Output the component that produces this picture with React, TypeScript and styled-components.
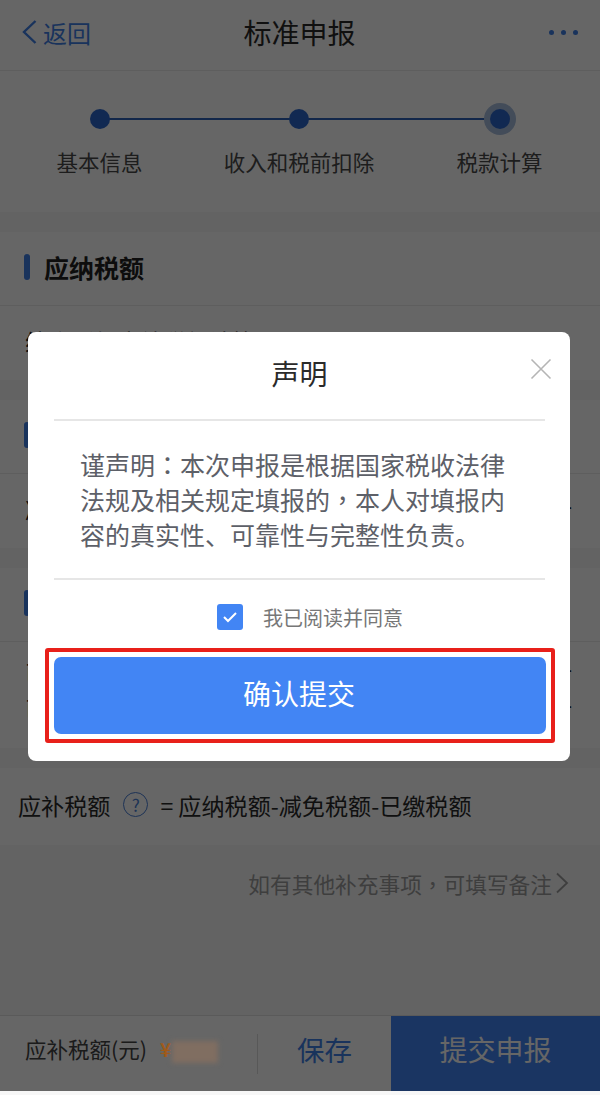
import styled, { createGlobalStyle } from "styled-components"

const GlobalStyle = createGlobalStyle`
  html, body {
    margin: 0;
    padding: 0;
    background: #fff;
    font-family: "Noto Sans CJK SC", "Noto Sans", sans-serif;
  }
  * { box-sizing: border-box; }
`

const Page = styled.div`
  position: relative;
  width: 600px;
  height: 1095px;
  display: flex;
  flex-direction: column;
  background: #f7f7f7;
  overflow: hidden;
`

const Header = styled.header`
  height: 71px;
  flex: none;
  display: grid;
  grid-template-columns: 1fr auto 1fr;
  align-items: center;
  padding: 0 22px 6px 21px;
  background: #fff;
  border-bottom: 1px solid #ececec;
`
const BackLink = styled.div`
  display: flex;
  align-items: center;
  gap: 5px;
  color: #3f7fe6;
  font-size: 24px;
`
const PageTitle = styled.h1`
  margin: 0;
  font-size: 28px;
  font-weight: 400;
  color: #2a2a2a;
`
const MoreDots = styled.div`
  justify-self: end;
  display: flex;
  gap: 7px;
  & > i {
    width: 5px;
    height: 5px;
    border-radius: 50%;
    background: #3f7fe6;
  }
`

const Steps = styled.section`
  height: 141px;
  flex: none;
  display: grid;
  grid-template-columns: 199px 200px 201px;
  padding-top: 32px;
  background: #fff;
  margin-bottom: 20px;
`
const Step = styled.div`
  display: flex;
  flex-direction: column;
  align-items: center;
`
const DotTrack = styled.div<{ $left?: boolean; $right?: boolean }>`
  width: 100%;
  height: 32px;
  display: flex;
  align-items: center;
  justify-content: center;
  background: linear-gradient(#2f62b8, #2f62b8)
    ${(p) => (p.$left ? "0" : "100%")} 50% / ${(p) => (p.$left && p.$right ? "100%" : "50%")} 2px no-repeat;
`
const Dot = styled.span<{ $active?: boolean }>`
  width: 20px;
  height: 20px;
  border-radius: 50%;
  background: #2c68cc;
  box-shadow: ${(p) => (p.$active ? "0 0 0 6px #a8bede" : "none")};
`
const StepLabel = styled.span`
  margin-top: 12px;
  font-size: 21.5px;
  line-height: 30px;
  color: #4a4a4a;
`

const Section = styled.section<{ $height: number }>`
  height: ${(p) => p.$height}px;
  flex: none;
  background: #fff;
  margin-bottom: 20px;
  overflow: hidden;
`
const SectionTitle = styled.div`
  height: 74px;
  display: flex;
  align-items: center;
  gap: 14px;
  padding: 0 24px 4px;
  border-bottom: 1px solid #ececec;
  font-size: 25px;
  font-weight: 700;
  color: #222;
  &::before {
    content: "";
    width: 6px;
    height: 26px;
    border-radius: 3px;
    background: #3f7fe6;
  }
`
const RowText = styled.p<{ $top: number; $lineHeight?: number; $justify?: boolean }>`
  margin: 0;
  padding: ${(p) => p.$top}px 28px 0 25px;
  font-size: 23px;
  line-height: ${(p) => p.$lineHeight ?? 30}px;
  color: #222;
  text-align: ${(p) => (p.$justify ? "justify" : "left")};
  text-align-last: ${(p) => (p.$justify ? "justify" : "left")};
`

const FormulaRow = styled.div`
  height: 77px;
  flex: none;
  display: flex;
  align-items: center;
  padding: 0 0 4px 18px;
  background: #fff;
  font-size: 23.1px;
  color: #2a2a2a;
`
const HelpIcon = styled.span`
  width: 25px;
  height: 25px;
  margin: 0 12px 0 13px;
  display: flex;
  align-items: center;
  justify-content: center;
  border: 1.5px solid #4a7fd6;
  border-radius: 50%;
  font-size: 17px;
  color: #4a7fd6;
`

const NoteLink = styled.div`
  height: 80px;
  flex: none;
  display: flex;
  align-items: center;
  justify-content: flex-end;
  gap: 3px;
  padding: 0 31px 4px 0;
  font-size: 21.7px;
  color: #9c9c9c;
`
const Punct = styled.span`
  font-family: "Noto Sans CJK TC", "Noto Sans CJK SC", sans-serif;
`
const Spacer = styled.div`
  flex: 1;
`

const Footer = styled.footer`
  height: 76px;
  flex: none;
  margin-bottom: 4px;
  display: flex;
  align-items: center;
  background: #fff;
  border-top: 1px solid #e2e2e2;
`
const AmountLabel = styled.span`
  width: 122px;
  margin: 0 0 10px 25px;
  font-size: 21.5px;
  white-space: nowrap;
  color: #444;
`
const Currency = styled.span`
  position: relative;
  z-index: 11;
  width: 12px;
  margin: 0 0 10px 13px;
  font-size: 19px;
  font-weight: 700;
  color: #a05a1a;
`
const MaskedAmount = styled.span`
  position: relative;
  z-index: 11;
  width: 46px;
  height: 22px;
  margin-bottom: 4px;
  background: #806e61;
  filter: blur(2.5px);
`
const FooterDivider = styled.span`
  width: 1px;
  height: 40px;
  margin-left: 39px;
  background: #ddd;
`
const SaveButton = styled.button`
  width: 133px;
  height: 100%;
  padding: 0 0 10px;
  border: 0;
  background: none;
  font: inherit;
  font-size: 27.5px;
  color: #3f7fe6;
`
const SubmitButton = styled.button`
  flex: 1;
  height: 100%;
  padding: 0 0 10px;
  border: 0;
  background: #4285f4;
  font: inherit;
  font-size: 28px;
  color: #fff;
`

const Overlay = styled.div`
  position: absolute;
  inset: 0 0 4px;
  z-index: 10;
  display: flex;
  justify-content: center;
  align-items: flex-start;
  padding: 332px 2px 0 0;
  background: rgba(0, 0, 0, 0.6);
`
const Modal = styled.div`
  width: 542px;
  height: 429px;
  display: flex;
  flex-direction: column;
  border-radius: 8px;
  background: #fff;
`
const ModalHeader = styled.div`
  height: 89px;
  flex: none;
  display: flex;
  align-items: center;
  justify-content: center;
  position: relative;
  margin: 0 25px 0 26px;
  padding-bottom: 6px;
  border-bottom: 2px solid #e6e6e6;
`
const ModalTitle = styled.h2`
  margin: 0;
  font-size: 28px;
  font-weight: 400;
  color: #2a2a2a;
`
const CloseIcon = styled.svg`
  position: absolute;
  top: 26px;
  right: -7px;
  width: 22px;
  height: 22px;
`
const ModalBody = styled.p`
  height: 159px;
  flex: none;
  margin: 0 25px 0 26px;
  padding: 26px 0 0 26px;
  border-bottom: 2px solid #e6e6e6;
  font-size: 25px;
  line-height: 35px;
  color: #5d6068;
  white-space: nowrap;
`
const AgreeRow = styled.label`
  height: 68px;
  flex: none;
  display: flex;
  align-items: center;
  justify-content: center;
  gap: 20px;
  padding: 6px 0 0 22px;
  font-size: 20px;
  color: #777;
`
const CheckBox = styled.span`
  width: 26px;
  height: 26px;
  display: flex;
  align-items: center;
  justify-content: center;
  border-radius: 3px;
  background: #4285f4;
`
const Highlight = styled.div`
  height: 95px;
  margin: 0 15px 0 17px;
  padding: 5px;
  border: 4px solid #e8201a;
  border-radius: 3px;
`
const ConfirmButton = styled.button`
  width: 100%;
  height: 100%;
  padding: 0 2px 6px 0;
  border: 0;
  border-radius: 7px;
  background: #4285f4;
  font: inherit;
  font-size: 28px;
  color: #fff;
`

function App() {
  return (
    <>
      <GlobalStyle />
      <Page>
        <Header>
          <BackLink>
            <svg width="17" height="26" viewBox="0 0 17 26" fill="none" stroke="#3f7fe6" strokeWidth="2.4">
              <path d="M14.5 2 3 13l11.5 11" />
            </svg>
            返回
          </BackLink>
          <PageTitle>标准申报</PageTitle>
          <MoreDots>
            <i />
            <i />
            <i />
          </MoreDots>
        </Header>

        <Steps>
          <Step>
            <DotTrack $right>
              <Dot />
            </DotTrack>
            <StepLabel>基本信息</StepLabel>
          </Step>
          <Step>
            <DotTrack $left $right>
              <Dot />
            </DotTrack>
            <StepLabel>收入和税前扣除</StepLabel>
          </Step>
          <Step>
            <DotTrack $left>
              <Dot $active />
            </DotTrack>
            <StepLabel>税款计算</StepLabel>
          </Step>
        </Steps>

        <Section $height={148}>
          <SectionTitle>应纳税额</SectionTitle>
          <RowText $top={20}>综合所得应纳税额计算</RowText>
        </Section>
        <Section $height={148}>
          <SectionTitle>减免税额</SectionTitle>
          <RowText $top={20} $justify>
            减免税额合计金额减免税额合计金额减免税额合计
          </RowText>
        </Section>
        <Section $height={180}>
          <SectionTitle>已缴税额</SectionTitle>
          <RowText $top={12} $lineHeight={36} $justify>
            已缴税额合计金额已缴税额合计金额已缴税额合计
            <br />
            已缴税额合计金额已缴税额合计金额已缴税额合计
          </RowText>
        </Section>

        <FormulaRow>
          应补税额
          <HelpIcon>?</HelpIcon>= 应纳税额-减免税额-已缴税额
        </FormulaRow>
        <NoteLink>
          <span>
            如有其他补充事项<Punct>，</Punct>可填写备注
          </span>
          <svg width="14" height="22" viewBox="0 0 14 22" fill="none" stroke="#9c9c9c" strokeWidth="1.8">
            <path d="M2 1.5 12 11 2 20.5" />
          </svg>
        </NoteLink>
        <Spacer />

        <Footer>
          <AmountLabel>应补税额(元)</AmountLabel>
          <Currency>¥</Currency>
          <MaskedAmount />
          <FooterDivider />
          <SaveButton>保存</SaveButton>
          <SubmitButton>提交申报</SubmitButton>
        </Footer>

        <Overlay>
          <Modal>
            <ModalHeader>
              <ModalTitle>声明</ModalTitle>
              <CloseIcon viewBox="0 0 22 22" fill="none" stroke="#b5b5b5" strokeWidth="1.6">
                <path d="M1.5 1.5l19 19M20.5 1.5l-19 19" />
              </CloseIcon>
            </ModalHeader>
            <ModalBody>
              谨声明<Punct>：</Punct>本次申报是根据国家税收法律
              <br />
              法规及相关规定填报的<Punct>，</Punct>本人对填报内
              <br />
              容的真实性、可靠性与完整性负责。
            </ModalBody>
            <AgreeRow>
              <CheckBox>
                <svg width="16" height="12" viewBox="0 0 16 12" fill="none" stroke="#fff" strokeWidth="2">
                  <path d="M2 6l4 4 8-8" />
                </svg>
              </CheckBox>
              我已阅读并同意
            </AgreeRow>
            <Highlight>
              <ConfirmButton>确认提交</ConfirmButton>
            </Highlight>
          </Modal>
        </Overlay>
      </Page>
    </>
  )
}

export default App
